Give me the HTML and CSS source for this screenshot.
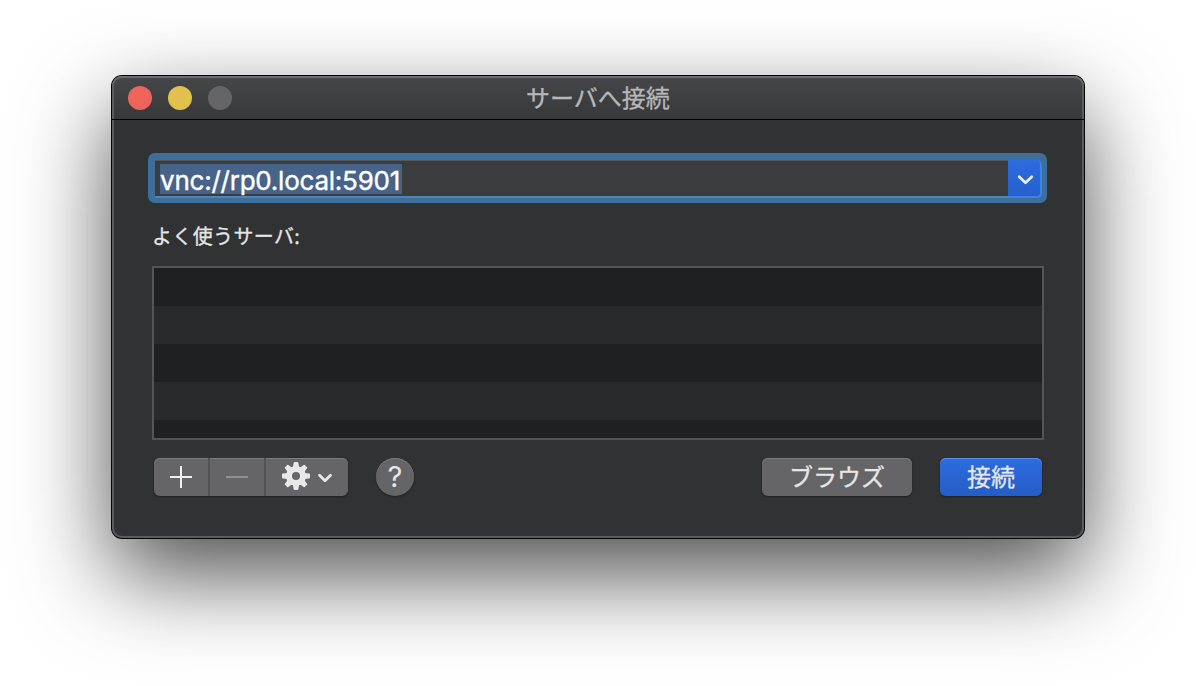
FILE: index.html
```html
<!DOCTYPE html>
<html lang="ja">
<head>
<meta charset="utf-8">
<title>サーバへ接続</title>
<link rel="stylesheet" href="styles.css">
</head>
<body>
<main class="window">
  <header class="titlebar">
    <div class="lights"><span class="light close"></span><span class="light minimize"></span><span class="light zoom"></span></div>
    <h1 class="title">サーバへ接続</h1>
  </header>
  <section class="content">
    <div class="combo">
      <div class="address"><span class="selection"><span class="url">vnc://rp0.local:5901</span></span></div>
      <div class="drop"><svg width="34" height="37" viewBox="0 0 34 37"><path d="M11.2 16.7 17.5 22.8 23.8 16.7" fill="none" stroke="#e6edfb" stroke-width="2.8" stroke-linecap="round" stroke-linejoin="round"/></svg></div>
    </div>
    <p class="label">よく使うサーバ:</p>
    <div class="list"></div>
    <footer class="actions">
      <div class="segments">
        <div class="segment add"><svg width="54" height="38" viewBox="0 0 54 38"><path d="M16 19H38M27 8V30" stroke="#f0f0f0" stroke-width="2"/></svg></div>
        <div class="segment remove"><svg width="54" height="38" viewBox="0 0 54 38"><path d="M16 19H38" stroke="#909092" stroke-width="2"/></svg></div>
        <div class="segment gear"><svg width="82" height="38" viewBox="0 0 82 38">
          <g transform="translate(30 18)" fill="#e8e8e9">
            <path fill-rule="evenodd" d="M0-10A10 10 0 1 1 0 10A10 10 0 1 1 0-10ZM0-4A4 4 0 1 0 0 4A4 4 0 1 0 0-4Z"/>
            <path id="tooth" d="M-3.1-8.5-2.4-13.2Q-2.3-14-1.5-14H1.5Q2.3-14 2.4-13.2L3.1-8.5Z"/>
            <use href="#tooth" transform="rotate(45)"/><use href="#tooth" transform="rotate(90)"/><use href="#tooth" transform="rotate(135)"/><use href="#tooth" transform="rotate(180)"/><use href="#tooth" transform="rotate(225)"/><use href="#tooth" transform="rotate(270)"/><use href="#tooth" transform="rotate(315)"/>
          </g>
          <path d="M53.5 17.2 59 22.7 64.5 17.2" fill="none" stroke="#e8e8e9" stroke-width="2.8" stroke-linecap="round" stroke-linejoin="round"/>
        </svg></div>
      </div>
      <div class="help">?</div>
      <div class="button browse">ブラウズ</div>
      <div class="button connect">接続</div>
    </footer>
  </section>
</main>
</body>
</html>
```
FILE: styles.css
```css
* { box-sizing: border-box; }
body {
  margin: 0;
  height: 686px;
  padding: 76px 112px 0;
  overflow: hidden;
  background: #fff;
  font-family: Inter, "Noto Sans CJK JP", sans-serif;
  color: #e6e6e6;
}
.window {
  position: relative;
  width: 972px;
  height: 462px;
  border-radius: 10px;
  background: #313234;
  box-shadow: 0 0 0 1px #050505, 0 36px 92px rgba(0, 0, 0, .7);
}
/* light rim that follows the window edge */
.window::after {
  content: "";
  position: absolute;
  inset: 0;
  border: 2px solid #5b5c5e;
  border-top-color: #707173;
  border-radius: 10px;
}
.titlebar {
  position: relative;
  z-index: 1;
  display: grid;
  grid-template-columns: 1fr auto 1fr;
  align-items: center;
  height: 44px;
  padding: 0 16px;
  border-bottom: 1px solid #000;
  border-radius: 10px 10px 0 0;
  background: linear-gradient(#46474a, #373839);
  box-shadow: inset 0 2px #6b6c6e, inset 2px 0 #5b5c5e, inset -2px 0 #5b5c5e;
}
.lights { display: flex; gap: 16px; }
.light { width: 24px; height: 24px; border-radius: 50%; }
.close { background: #ed655a; }
.minimize { background: #e1c04c; }
.zoom { background: #656567; }
.title {
  margin: 0 0 1px;
  font: 400 24px/36px "Noto Sans CJK JP", sans-serif;
  color: #b6b7b9;
  -webkit-text-stroke: .3px #b6b7b9;
}
.content { padding: 33px 36px 0; }
.combo {
  display: flex;
  width: 899px;
  height: 50px;
  padding: 7px 5px 5px 7px;
  border-radius: 7px;
  background: #3e6e9a;
}
.address {
  flex: 1;
  height: 38px;
  padding: 3px 5px;
  border-top: 1px solid #555658;
  border-bottom: 2px solid #4f86b8;
  background: #3b3c3e;
}
.selection {
  display: block;
  width: 242px;
  height: 30px;
  background: #476389;
}
.url {
  display: block;
  font-size: 26px;
  line-height: 33px;
  letter-spacing: -.23px;
  font-weight: 400;
  -webkit-text-stroke: .4px #fff;
  color: #fff;
  white-space: nowrap;
}
.drop {
  width: 34px;
  height: 38px;
  border-radius: 0 5px 5px 0;
  border-right: 2px solid #3b82ea;
  border-bottom: 2px solid #3b82ea;
  background: linear-gradient(#2d6be0, #2560cb);
}
.drop svg, .segment svg { display: block; }
.label {
  margin: 17px 0 0 4px;
  font: 400 20px/32px "Noto Sans CJK JP", sans-serif;
  letter-spacing: .35px;
  -webkit-text-stroke: .3px #e6e6e6;
}
.list {
  width: 892px;
  height: 174px;
  margin: 14px 0 0 4px;
  border: 2px solid #555557;
  background: repeating-linear-gradient(#1f2022 0 38px, #292a2c 38px 76px);
}
.actions {
  display: flex;
  width: 888px;
  margin: 18px 0 0 6px;
}
.segments { display: flex; height: 38px; }
.segments, .button, .help {
  border-radius: 6px;
  background: #656567;
  box-shadow: inset 0 1px #7c7c7e, 0 1px 2px rgba(0, 0, 0, .4);
}
.segment + .segment { border-left: 2px solid #525254; }
.add { width: 54px; }
.remove { width: 56px; }
.gear { width: 84px; }
.help {
  width: 38px;
  height: 38px;
  margin-left: 28px;
  border-radius: 50%;
  font-size: 29px;
  line-height: 38px;
  text-align: center;
}
.button {
  height: 38px;
  font: 400 24px/35px "Noto Sans CJK JP", sans-serif;
  text-align: center;
  -webkit-text-stroke: .3px #e6e6e6;
}
.browse { width: 150px; margin-left: auto; }
.connect {
  width: 102px;
  margin-left: 28px;
  background: linear-gradient(#2d6be0, #245ec6);
  box-shadow: inset 0 1px #5a8de8, 0 1px 2px rgba(0, 0, 0, .4);
}
```
